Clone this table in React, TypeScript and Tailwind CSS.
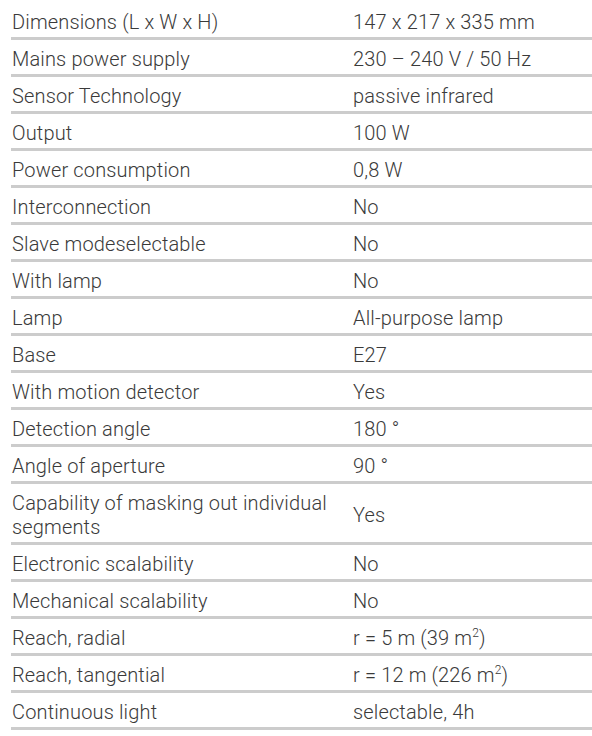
import React from "react";

const Sup = ({ children }: { children: React.ReactNode }) => (
  <sup className="text-[12px] top-[-0.65em]">{children}</sup>
);

const rows: [string, React.ReactNode, boolean?][] = [
  ["Dimensions (L x W x H)", "147 x 217 x 335 mm"],
  ["Mains power supply", "230 – 240 V / 50 Hz"],
  ["Sensor Technology", "passive infrared"],
  ["Output", "100 W"],
  ["Power consumption", "0,8 W"],
  ["Interconnection", "No"],
  ["Slave modeselectable", "No"],
  ["With lamp", "No"],
  ["Lamp", "All-purpose lamp"],
  ["Base", "E27"],
  ["With motion detector", "Yes"],
  ["Detection angle", "180 °"],
  ["Angle of aperture", "90 °"],
  ["Capability of masking out individual segments", "Yes", true],
  ["Electronic scalability", "No"],
  ["Mechanical scalability", "No"],
  [
    "Reach, radial",
    <>
      r = 5 m (39 m<Sup>2</Sup>)
    </>,
  ],
  [
    "Reach, tangential",
    <>
      r = 12 m (226 m<Sup>2</Sup>)
    </>,
  ],
  ["Continuous light", "selectable, 4h"],
];

export default function App() {
  return (
    <div
      className="w-[592px] h-[736px] bg-white overflow-hidden pt-[3px] pl-[11px] text-[#3a3a3a] text-[20px] leading-[24px] font-light tracking-[0.15px]"
      style={{ fontFamily: "Roboto, 'Noto Sans', sans-serif" }}
    >
      {rows.map(([label, value, tall], i) => (
        <div
          key={i}
          className={`flex items-center pt-[3px] border-b-[3px] border-[#cccccc] ${tall ? "h-[61px]" : "h-[37px]"}`}
        >
          <div className="w-[342px] pl-[1px] pr-2">{label}</div>
          <div className="flex-1">{value}</div>
        </div>
      ))}
    </div>
  );
}
